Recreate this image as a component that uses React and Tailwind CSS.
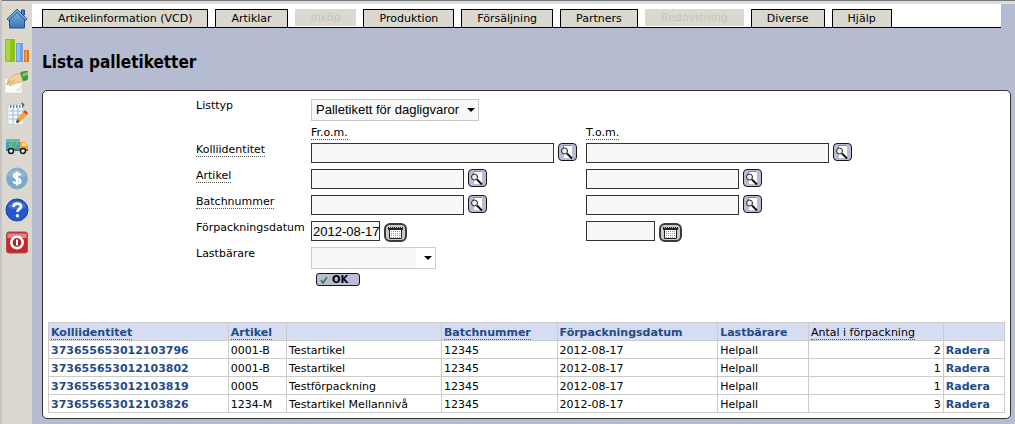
import React, { useState } from 'react'

const TABS = [
	{ label: 'Artikelinformation (VCD)' },
	{ label: 'Artiklar' },
	{ label: 'Inköp', disabled: true },
	{ label: 'Produktion' },
	{ label: 'Försäljning' },
	{ label: 'Partners' },
	{ label: 'Redovisning', disabled: true },
	{ label: 'Diverse' },
	{ label: 'Hjälp' },
]

const ROWS = [
	{ id: '373655653012103796', article: '0001-B', name: 'Testartikel', count: 2 },
	{ id: '373655653012103802', article: '0001-B', name: 'Testartikel', count: 1 },
	{ id: '373655653012103819', article: '0005', name: 'Testförpackning', count: 1 },
	{ id: '373655653012103826', article: '1234-M', name: 'Testartikel Mellannivå', count: 3 },
]

// ===== SIDEBAR ICONS =====
const HomeIcon = () => (
	<svg viewBox="0 0 24 24" className="w-6 h-6">
		<defs>
			<linearGradient id="home" x1="0" y1="0" x2="0" y2="1">
				<stop offset="0" stopColor="#86b3e0" />
				<stop offset="1" stopColor="#3a74b8" />
			</linearGradient>
		</defs>
		<path d="M16.500 4h3v5h-3z" fill="#4a7fb8" stroke="#234f87" />
		<path d="M4.500 12v10h15V12L12 4z" fill="url(#home)" stroke="#234f87" />
		<path d="M12 3 2 13l1.500 1.500L12 6.500l8.500 8L22 13z" fill="#76a7da" stroke="#234f87" strokeWidth=".9" />
	</svg>
)

const ChartIcon = () => (
	<svg viewBox="0 0 24 24" className="w-6 h-6">
		<path d="M0 1h10v23H0z" fill="#8cc21a" />
		<path d="M1 2h4v21H1z" fill="#a9d83b" />
		<path d="M11 5h7v19h-7z" fill="#6f9fe4" />
		<path d="M12 6h3v17h-3z" fill="#94bbf3" />
		<path d="M19 12h5v12h-5z" fill="#e2761b" />
		<path d="M20 13h2v10h-2z" fill="#f29a42" />
	</svg>
)

const HandIcon = () => (
	<svg viewBox="0 0 24 24" className="w-6 h-6">
		<path d="M0 9h17v14H0z" fill="#fbfbfb" stroke="#d3d3d3" strokeWidth=".6" />
		<path d="M9 21h7l1-6z" fill="#e5e7ec" />
		<path d="M2 12C5 8 8 4 12 4l6-1 2 6c-3 3-6 4-9 4l-6 3-1-1 3-3-5 3-1-1 3-3z" fill="#f2cf94" stroke="#cf9c50" strokeWidth=".6" />
		<path d="m6 10-3 3m7-3-4 3" stroke="#cf9c50" strokeWidth=".7" />
		<path d="M15 3c2-2 5-2 8-2v8c-2 2-4 2-5 2-1-3-2-5-3-8z" fill="#3c9a3b" />
		<path d="M17 4c2-1 4-2 6-2v3c-2 1-4 1-5 2z" fill="#7bc86b" />
	</svg>
)

const NotesIcon = () => (
	<svg viewBox="0 0 24 24" className="w-6 h-6">
		<path d="m3 3 15-1 1 20-4 1-12-1z" fill="#f6f9fd" stroke="#b7c3d3" strokeWidth=".7" />
		<path d="M4 9h14M4 13h14M4 17h12M8 6v16M13 6v16" stroke="#8cabd3" strokeWidth=".8" />
		<path d="M5 4.500h13" stroke="#64768f" strokeWidth="2.500" strokeDasharray="1.500 1.500" />
		<path d="m17 1 2 3" stroke="#4c5664" strokeWidth="1.500" />
		<path d="m12 17 6-7 4 3-6 6-4 1z" fill="#f3a331" />
		<path d="m18 10 2-2 3 3-1 2z" fill="#d84a31" />
		<path d="m12 17-1 4 4-1z" fill="#54412b" />
	</svg>
)

const TruckIcon = () => (
	<svg viewBox="0 0 24 24" className="w-6 h-6">
		<path d="M1 5h14v11H1z" fill="#469ec9" />
		<path d="M1 5h14v3H1z" fill="#64b6d8" />
		<path d="M5 9c1-3 5-3 7-1l1-1v4H9l2-2c-2-1-3 0-4 1zm6 3c-1 2-5 3-7 1v-3h4l-2 2c2 1 4 0 5-1z" fill="#6bc763" />
		<path d="M15 8h5l3 4v5h-8z" fill="#f5a51f" />
		<path d="M17 9h3l2 3h-5z" fill="#fbe7ad" />
		<path d="M1 15h22v2H1z" fill="#647078" />
		<circle cx="6" cy="17" r="2.500" fill="#e8e8e8" stroke="#181818" strokeWidth="1.400" />
		<circle cx="18" cy="17" r="2.500" fill="#e8e8e8" stroke="#181818" strokeWidth="1.400" />
	</svg>
)

const DollarIcon = () => (
	<svg viewBox="0 0 24 24" className="w-6 h-6">
		<circle cx="12" cy="12.500" r="10.500" fill="#7ba9cd" stroke="#8fb1ca" />
		<path d="M3 9.500a10 10 0 0 1 18 0c-5 3-13 3-18 0z" fill="#90b7d7" />
		<path d="M15.500 9.500c-1-2.300-6.500-2.500-6.500.4 0 3 6.500 2 6.500 5.200 0 3-6 2.800-7.300.4M12 5.500v14" fill="none" stroke="#fff" strokeWidth="2.400" />
	</svg>
)

const HelpIcon = () => (
	<svg viewBox="0 0 24 24" className="w-6 h-6">
		<circle cx="12" cy="12" r="11" fill="#2358cf" stroke="#1b449f" />
		<path d="M3 9a10 10 0 0 1 18 0c-5 3-13 3-18 0z" fill="#3f75e0" />
		<path d="M8.500 9c0-4.500 7.500-4.500 7.500-.5 0 2.500-3.500 2.500-3.500 5.500" fill="none" stroke="#fff" strokeWidth="2.800" />
		<circle cx="12.400" cy="17.700" r="1.700" fill="#fff" />
	</svg>
)

const PowerIcon = () => (
	<svg viewBox="0 0 24 24" className="w-6 h-6">
		<rect x="1.500" y="2" width="21" height="21" rx="2.500" fill="#c9262c" stroke="#b8484a" />
		<path d="M2.500 3.500h19v4.500h-19z" fill="#e88283" />
		<circle cx="12" cy="12.500" r="5.700" fill="#a92429" stroke="#fff" strokeWidth="2.600" />
		<path d="M12 9.500v6" stroke="#fff" strokeWidth="2" />
	</svg>
)

const SIDEBAR = [
	{ title: 'Hem', Icon: HomeIcon },
	{ title: 'Statistik', Icon: ChartIcon },
	{ title: 'Order', Icon: HandIcon },
	{ title: 'Anteckningar', Icon: NotesIcon },
	{ title: 'Transport', Icon: TruckIcon },
	{ title: 'Ekonomi', Icon: DollarIcon },
	{ title: 'Hjälp', Icon: HelpIcon },
	{ title: 'Logga ut', Icon: PowerIcon },
]

// ===== FORM PARTS =====
const SearchButton = ({ label }) => (
	<button
		type="button"
		aria-label={label}
		className="w-[19px] h-[18px] shrink-0 rounded-[4px] border border-[#15151f] bg-[#b9bcd2]"
	>
		<svg viewBox="0 0 17 16" className="w-full h-full">
			<path d="M5 2h8v12H5z" fill="#fff" />
			<path d="M4.500 5V1.500h8" fill="none" stroke="#8589a0" />
			<circle cx="5.500" cy="7" r="3" fill="#e7eef0" stroke="#222" />
			<path d="m8 9.500 5 5" stroke="#111" strokeWidth="2" />
		</svg>
	</button>
)

const CalendarButton = ({ label }) => (
	<button
		type="button"
		aria-label={label}
		className="w-[23px] h-[19px] mt-0.5 shrink-0 rounded-[6px] border-2 border-[#3a3a3a] bg-[#c9cac9]"
	>
		<svg viewBox="0 0 19 15" className="w-full h-full">
			<path d="M3.500 4.500h12v9h-12z" fill="#fff" stroke="#222" />
			<path d="M2 2h15v3H2z" fill="#222" />
			<path d="M3 2.500h13" stroke="#ccc" strokeDasharray="1 1" />
			<path d="M5.500 6v7m2-7v7m2-7v7m2-7v7m2-7v7" stroke="#8e9ab0" strokeDasharray="1 1" />
		</svg>
	</button>
)

const Arrow = () => (
	<svg viewBox="0 0 8 4" className="absolute right-1 top-1/2 -mt-0.5 w-2 h-1 pointer-events-none">
		<path d="M0 0h8L4 4z" fill="#000" />
	</svg>
)

const Term = ({ children }) => (
	<span className="border-b border-dotted border-[#555]">{children}</span>
)

const FIELD = 'h-5 border border-[#333] bg-[#f8f8f7] pl-px font-["Liberation_Sans",sans-serif] text-[13px] outline-none'

const RANGES = [
	{ key: 'kolli', label: 'Kolliidentitet', width: 'w-[243px]' },
	{ key: 'artikel', label: 'Artikel', width: 'w-[153px]' },
	{ key: 'batch', label: 'Batchnummer', width: 'w-[153px]' },
	{ key: 'datum', label: 'Förpackningsdatum', width: 'w-[69px]', date: true },
]

const App = () => {
	const [values, setValues] = useState({ 'datum-from': '2012-08-17' })

	const update = (key, value) => {
		setValues(prev => ({ ...prev, [key]: value }))
	}

	const renderField = (range, end) => {
		const key = `${range.key}-${end}`
		const name = `${range.label} ${end === 'from' ? 'fr.o.m.' : 't.o.m.'}`
		return (
			<div className="flex items-start gap-1 h-[26px]">
				<input
					id={key}
					type="text"
					aria-label={name}
					value={values[key] || ''}
					onChange={e => update(key, e.target.value)}
					className={`${FIELD} ${range.width}`}
				/>
				{range.date
					? <CalendarButton label={`Välj ${name}`} />
					: <SearchButton label={`Sök ${name}`} />}
			</div>
		)
	}

	return (
		<div className='min-h-screen flex flex-col bg-[#b5bbd1] border-l-2 border-l-[#c4c4c4] text-black font-["DejaVu_Sans",Verdana,sans-serif] text-[11px] leading-[14px]'>
			<div className="h-1 border-t border-[#777] bg-[#dcdcdc]" />

			<div className="flex flex-1">

				{/* SIDEBAR */}
				<nav className="w-[30px] shrink-0 bg-[#dbd8d0] pt-0.5 flex flex-col items-center gap-2">
					{SIDEBAR.map(({ title, Icon }) => (
						<a key={title} href="#" aria-label={title}>
							<Icon />
						</a>
					))}
				</nav>

				<div className="flex-1 min-w-0">

					{/* TABS */}
					<div className="mr-3.5 h-6 pl-2.5 flex items-end gap-[7px] bg-white border-b border-black">
						{TABS.map(tab => (
							<button
								key={tab.label}
								type="button"
								disabled={tab.disabled}
								className={`px-[15px] whitespace-nowrap bg-[#dbd8d0] ${tab.disabled
									? 'h-[17px] mb-px text-[#c6c4be] border-x border-[#dbd8d0]'
									: 'h-[18px] border border-b-0 border-black'
									}`}
							>
								{tab.label}
							</button>
						))}
					</div>

					<main className="pl-2.5 pr-1 pb-1">
						<h1 className="pt-6 pb-[18px] text-[17px] leading-5 font-bold font-['DejaVu_Sans_Condensed','DejaVu_Sans',Tahoma,sans-serif]">
							Lista palletiketter
						</h1>

						<section className="rounded-[5px] border border-[#333] bg-white px-[5px] pt-2 pb-[5px]">

							{/* FILTER */}
							<form
								className="pl-[148px] grid grid-cols-[115px_275px_1fr]"
								onSubmit={e => e.preventDefault()}
							>
								<label htmlFor="listtyp">Listtyp</label>
								<div className="col-span-2 h-[27px]">
									<div className="relative w-[168px]">
										<select
											id="listtyp"
											className='appearance-none w-full h-[22px] pl-1 border border-[#c8c8c8] bg-[#f8f8f7] font-["Liberation_Sans",sans-serif] text-[13px]'
										>
											<option>Palletikett för dagligvaror</option>
										</select>
										<Arrow />
									</div>
								</div>

								<div className="col-start-2 h-[17px]"><Term>Fr.o.m.</Term></div>
								<div className="h-[17px]"><Term>T.o.m.</Term></div>

								{RANGES.map(range => (
									<React.Fragment key={range.key}>
										<label htmlFor={`${range.key}-from`}>
											{range.date ? range.label : <Term>{range.label}</Term>}
										</label>
										{renderField(range, 'from')}
										{renderField(range, 'to')}
									</React.Fragment>
								))}

								<label htmlFor="lastbarare">Lastbärare</label>
								<div className="col-span-2 h-[26px]">
									<div className="relative w-[125px]">
										<select
											id="lastbarare"
											className="appearance-none w-full h-[22px] border border-[#ccc] bg-[linear-gradient(90deg,#f8f8f7_104px,#fff_104px)]"
										>
											<option></option>
										</select>
										<Arrow />
									</div>
								</div>

								<button
									type="submit"
									className="col-start-2 ml-[5px] w-11 h-[13px] flex items-center gap-1 px-[3px] rounded-[3px] border border-[#15151f] bg-[#b9bcd2] text-[10px] leading-none font-bold"
								>
									<svg viewBox="0 0 8 8" className="w-2 h-2">
										<path d="m1 4 2 3 4-6" fill="none" stroke="#2f8a4b" strokeWidth="1.800" />
									</svg>
									OK
								</button>
							</form>

							{/* RESULT */}
							<table className="mt-9 w-full table-fixed border-collapse [&_td]:border [&_th]:border [&_td]:border-[#ccc] [&_th]:border-[#ccc] [&_td]:h-[18px] [&_th]:h-[18px] [&_td]:px-0.5 [&_th]:px-0.5 [&_td]:pt-0.5 [&_th]:pt-0.5 [&_td]:whitespace-nowrap [&_th]:whitespace-nowrap">
								<colgroup>
									<col className="w-[18.8%]" />
									<col className="w-[6.1%]" />
									<col className="w-[16.2%]" />
									<col className="w-[12.1%]" />
									<col className="w-[16.8%]" />
									<col className="w-[9.5%]" />
									<col className="w-[14.1%]" />
									<col />
								</colgroup>
								<thead className="bg-[#d6dcf2] text-left text-[#1f4b86]">
									<tr>
										<th><Term>Kolliidentitet</Term></th>
										<th><Term>Artikel</Term></th>
										<th></th>
										<th><Term>Batchnummer</Term></th>
										<th>Förpackningsdatum</th>
										<th>Lastbärare</th>
										<th className="font-normal text-black"><Term>Antal i förpackning</Term></th>
										<th></th>
									</tr>
								</thead>
								<tbody>
									{ROWS.map(row => (
										<tr key={row.id}>
											<td><a href="#" className="font-bold text-[#1f4b86]">{row.id}</a></td>
											<td>{row.article}</td>
											<td>{row.name}</td>
											<td>12345</td>
											<td>2012-08-17</td>
											<td>Helpall</td>
											<td className="text-right">{row.count}</td>
											<td><a href="#" className="font-bold text-[#1f4b86]">Radera</a></td>
										</tr>
									))}
								</tbody>
							</table>
						</section>
					</main>
				</div>
			</div>
		</div>
	)
}

export default App
